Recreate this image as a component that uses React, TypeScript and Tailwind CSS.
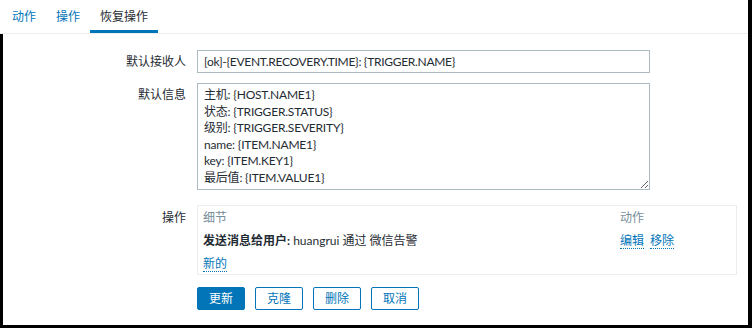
import { useState } from 'react';

const font = 'font-["Lato","Noto_Sans_CJK_SC",sans-serif]';

const message = [
  '主机: {HOST.NAME1}',
  '状态: {TRIGGER.STATUS}',
  '级别: {TRIGGER.SEVERITY}',
  'name: {ITEM.NAME1}',
  'key: {ITEM.KEY1}',
  '最后值: {ITEM.VALUE1}',
].join('\n');

function FormRow({ label, children, labelClass = 'pt-[5px]' }: { label: string; children: React.ReactNode; labelClass?: string }) {
  return (
    <div className="flex items-start gap-[11px]">
      <div className={`w-[183px] shrink-0 text-right leading-[14px] text-[#1f2c33] ${labelClass}`}>{label}</div>
      <div className="min-w-0 flex-1">{children}</div>
    </div>
  );
}

function DottedLink({ children }: { children: React.ReactNode }) {
  return (
    <a className="cursor-pointer border-b border-dotted border-[#0275b8] text-[#0275b8]">{children}</a>
  );
}

export default function App() {
  const [tab, setTab] = useState('恢复操作');
  const tabs = ['动作', '操作', '恢复操作'];

  return (
    <div className={`h-[328px] w-[752px] bg-black text-[12px] ${font}`}>
      <div className="h-[325px] w-[748px] bg-white">
        <div className="flex h-[34px] border-b border-[#ebeef0] pl-[2px]">
          {tabs.map((t) => (
            <button
              key={t}
              onClick={() => setTab(t)}
              className={`h-[33px] border-b-[3px] px-[10px] pt-[3px] leading-[14px] ${
                tab === t ? 'border-[#0275b8] text-[#1f2c33]' : 'border-transparent text-[#0275b8]'
              }`}
            >
              {t}
            </button>
          ))}
        </div>

        <div className="flex h-[291px] flex-col border-l-[3px] border-black pt-4 pr-[11px]">
          <div className="flex flex-col gap-[10px]">
            <FormRow label="默认接收人">
              <input
                readOnly
                value="[ok]-{EVENT.RECOVERY.TIME}: {TRIGGER.NAME}"
                className="h-[23px] w-[453px] border border-[#acbbc2] px-[6px] text-[12px] tracking-[-0.3px] text-[#1f2c33] outline-none"
              />
            </FormRow>
            <FormRow label="默认信息">
              <textarea
                readOnly
                value={message}
                className="block h-[107px] w-[453px] resize border border-[#acbbc2] px-[6px] py-[3px] text-[12px] leading-[16.5px] tracking-[-0.2px] text-[#1f2c33] outline-none"
              />
            </FormRow>
          </div>

          <div className="mt-[15px]">
            <FormRow label="操作" labelClass="pt-[6px]">
              <div className="h-[70px] w-[540px] border border-[#ebeef0] px-[5px] pt-[5px]">
                <div className="flex leading-[14px] text-[#768d99]">
                  <div className="w-[417px]">细节</div>
                  <div>动作</div>
                </div>
                <div className="mt-[9px] flex leading-[14px] text-[#1f2c33]">
                  <div className="w-[417px]">
                    <span className="font-bold">发送消息给用户:</span> huangrui 通过 微信告警
                  </div>
                  <div className="flex gap-[6px]">
                    <DottedLink>编辑</DottedLink>
                    <DottedLink>移除</DottedLink>
                  </div>
                </div>
                <div className="mt-[8px] leading-[14px]">
                  <DottedLink>新的</DottedLink>
                </div>
              </div>
            </FormRow>
          </div>

          <div className="mt-[12px] flex gap-[10px] pl-[194px]">
            <button className="h-[23px] w-[48px] rounded-[2px] border border-[#0275b8] bg-[#0275b8] text-white">更新</button>
            <button className="h-[23px] w-[48px] rounded-[2px] border border-[#0275b8] bg-white text-[#0275b8]">克隆</button>
            <button className="h-[23px] w-[48px] rounded-[2px] border border-[#0275b8] bg-white text-[#0275b8]">删除</button>
            <button className="h-[23px] w-[48px] rounded-[2px] border border-[#0275b8] bg-white text-[#0275b8]">取消</button>
          </div>
        </div>
      </div>
    </div>
  );
}
